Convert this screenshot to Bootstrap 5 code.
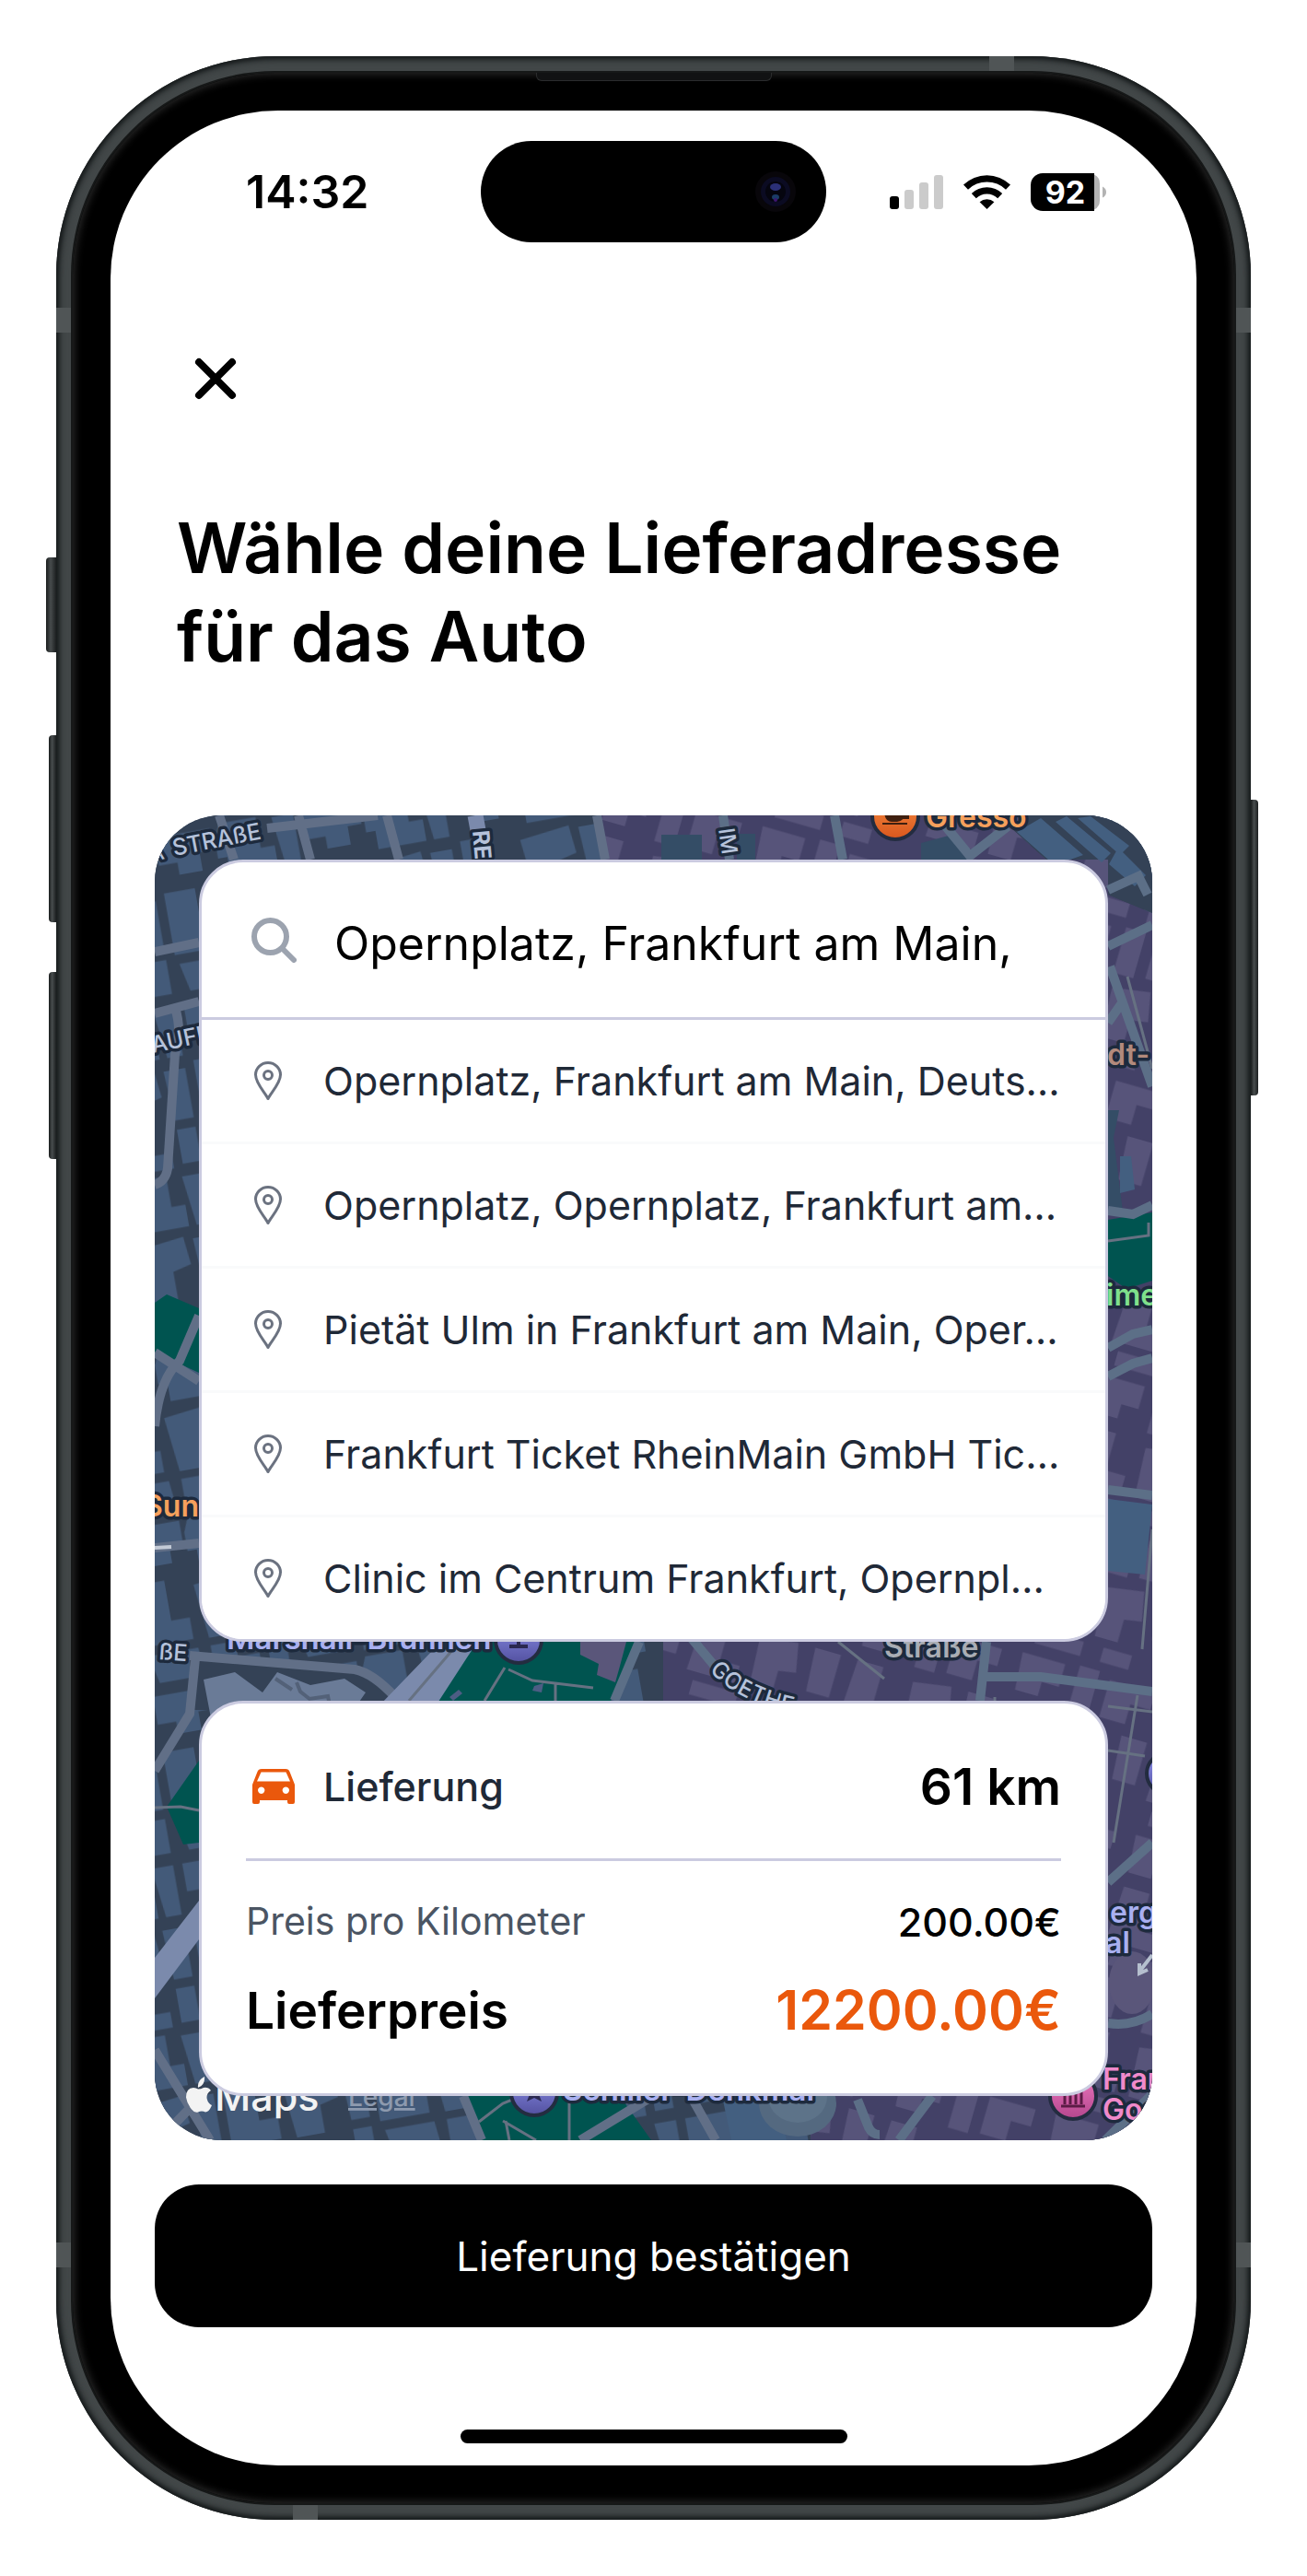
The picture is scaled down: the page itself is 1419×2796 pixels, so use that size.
<!DOCTYPE html>
<html lang="de">
<head>
<meta charset="utf-8">
<meta name="viewport" content="width=device-width, initial-scale=1">
<title>Lieferadresse wählen</title>
<link rel="stylesheet" href="https://cdn.jsdelivr.net/npm/bootstrap@5.3.0/dist/css/bootstrap.min.css">
<style>
  :root { --line: #cbcbe0; --accent: #ea580c; --ink: #1f2937; }
  body { font-family: Inter, "Open Sans", sans-serif; color: #000; background: #fff; padding: 61px; }

  /* phone body */
  .phone { position: relative; padding: 16px; border-radius: 238px; background: #434849;
    box-shadow: inset 0 0 4px 3px #181c1d, inset 0 0 12px 2px #262b2c; }
  .bezel { padding: 41px; border: 2px solid #161818; border-radius: 222px; background: #000;
    box-shadow: inset 0 0 10px 1px #303030; }
  .screen { background: #fff; border-radius: 182px; overflow: hidden; padding-bottom: 24px; }
  .key { position: absolute; left: -10px; width: 10px; border-radius: 4px 0 0 4px;
    background: linear-gradient(90deg, #191c1c, #474c4d 45%, #1c1f20); }
  .key-action { top: 544px; height: 103px; left: -11px; width: 11px; }
  .key-up { top: 737px; height: 203px; left: -8px; width: 8px; }
  .key-down { top: 994px; height: 203px; left: -8px; width: 8px; }
  .key-power { top: 807px; height: 321px; left: auto; right: -8px; width: 8px; border-radius: 0 4px 4px 0; }
  .band { position: absolute; background: #505556; }
  .band-side { width: 16px; height: 27px; }
  .band-edge { width: 27px; height: 16px; }
  .band-lt { left: 0; top: 273px; } .band-rt { right: 0; top: 273px; }
  .band-lb { left: 0; bottom: 274px; } .band-rb { right: 0; bottom: 274px; }
  .band-t { right: 257px; top: 0; } .band-b { left: 257px; bottom: 0; }
  .earpiece { position: absolute; top: 18px; left: 50%; width: 256px; height: 9px; margin-left: -128px;
    background: #111213; border: 1px solid #2b2c2d; border-top: 0; border-radius: 0 0 6px 6px; }

  /* status bar */
  .status { display: grid; grid-template-columns: 1fr 375px 1fr; height: 176px; align-items: center; }
  .clock { font-size: 50px; font-weight: 600; line-height: 60px; padding-left: 147px; }
  .island { height: 110px; border-radius: 55px; background: #000; padding-right: 33px; }
  .camera { width: 44px; height: 44px; }
  .signals { gap: 22px; padding-right: 98px; }
  .battery { position: relative; width: 82px; height: 41px; }
  .battery svg { position: absolute; inset: 0; }
  .battery span { position: relative; width: 75px; line-height: 41px; font-size: 34px; font-weight: 700; color: #fff; }

  .btn-dismiss { width: 84px; height: 84px; margin: 73px 0 0 72px; padding: 0; border: 0; background: none; }
  .page-title { font-size: 75px; line-height: 96px; font-weight: 600; margin: 94px 72px 146px; }

  /* map with panels */
  .map-area { position: relative; margin: 0 48px; padding: 48px; border-radius: 72px; overflow: hidden; gap: 64px; background: #344256; }
  .map-art { position: absolute; inset: 0; width: 100%; height: 100%; }
  .panel { position: relative; border: 3px solid var(--line); border-radius: 48px; background: #fff; overflow: hidden; }
  .search-line { height: 171px; padding: 0 40px 0 54px; gap: 41px; border-bottom: 3px solid var(--line); }
  .search-line input { border: 0; padding: 8px 0 0; font-size: 50px; line-height: 60px; color: #000; box-shadow: none; background: none; }
  .hits .list-group-item { height: 135px; padding: 0 40px 0 57px; gap: 45px; border: 0; border-bottom: 3px solid #f9fafb;
    font-size: 43px; line-height: 60px; color: var(--ink); background: #fff; }
  .hits .list-group-item:last-child { height: 132px; border-bottom: 0; }
  .quote { padding: 48px; }
  .leg { height: 84px; }
  .leg-name { font-size: 43px; font-weight: 500; color: var(--ink); gap: 29px; padding-left: 5px; }
  .strong-line { font-size: 55px; font-weight: 600; }
  .quote hr { margin: 36px 0; border: 0; height: 3px; background: var(--line); opacity: 1; }
  .rate { height: 60px; margin-bottom: 24px; font-size: 43px; font-weight: 500; }
  .rate-name { font-size: 41px; font-weight: 400; color: #4b5563; }
  .total { color: var(--accent); font-size: 59px; }

  .btn-confirm { display: block; width: calc(100% - 96px); height: 155px; margin: 48px 48px 111px; border: 0; border-radius: 48px;
    background: #000; color: #fff; font-size: 44px; font-weight: 400; }
  .home-bar { width: 420px; height: 15px; border-radius: 8px; background: #000; }

  .halo { paint-order: stroke; stroke: #1d2a3d; stroke-width: 7px; stroke-linejoin: round; }
  .road { fill: none; stroke: #616f87; stroke-width: 10px; }
  .road-teal { fill: none; stroke: #5c6f87; stroke-width: 10px; }
  .alley { fill: none; stroke: #667182; stroke-width: 3px; }
</style>
</head>
<body>
<div class="phone">
  <span class="key key-action"></span><span class="key key-up"></span><span class="key key-down"></span><span class="key key-power"></span>
  <div class="bezel">
    <main class="screen">
      <header class="status">
        <time class="clock">14:32</time>
        <div class="island d-flex align-items-center justify-content-end">
          <svg class="camera" viewBox="0 0 44 44" aria-hidden="true">
            <circle cx="22" cy="22" r="22" fill="#08060a"/><circle cx="22" cy="22" r="16" fill="#0b0b22"/>
            <circle cx="22" cy="22" r="11" fill="#05050f"/><ellipse cx="22" cy="17" rx="6" ry="4" fill="#2b3077"/>
            <ellipse cx="22" cy="28" rx="4" ry="3" fill="#1b3c66"/><circle cx="22" cy="31" r="2" fill="#3d1670"/>
          </svg>
        </div>
        <div class="signals d-flex align-items-center justify-content-end">
          <svg width="58" height="37" viewBox="0 0 58 37" role="img" aria-label="Mobilfunk">
            <rect y="23" width="10" height="14" rx="3"/><g fill="#cbcbcb"><rect x="16" y="16" width="10" height="21" rx="3"/><rect x="32" y="8" width="10" height="29" rx="3"/><rect x="48" width="10" height="37" rx="3"/></g>
          </svg>
          <svg width="51" height="37" viewBox="0 0 51 37" role="img" aria-label="WLAN">
            <path d="M0 10.600a36.500 36.500 0 0 1 51 0l-5 5.200a29.300 29.300 0 0 0-41 0z"/>
            <path d="M8.800 20a24.200 24.200 0 0 1 33.400 0l-5 5.200a17 17 0 0 0-23.400 0z"/>
            <path d="M17.600 29.200a11.800 11.800 0 0 1 15.800 0L25.500 37z"/>
          </svg>
          <div class="battery">
            <svg viewBox="0 0 82 41" aria-hidden="true">
              <path d="M13 0h56v41H13A13 13 0 0 1 0 28V13A13 13 0 0 1 13 0z"/>
              <path d="M69 1.500a11 11 0 0 1 6 10v18a11 11 0 0 1-6 10z" fill="#b3b3b3"/>
              <path d="M78 14.500q4 2 4 6t-4 6z" fill="#b3b3b3"/>
            </svg>
            <span class="d-block text-center">92</span>
          </div>
        </div>
      </header>

      <button type="button" class="btn btn-dismiss d-flex align-items-center justify-content-center" aria-label="Schließen">
        <svg width="46" height="46" viewBox="0 0 46 46"><path d="M5 5l36 36M41 5L5 41" stroke="#000" stroke-width="8" stroke-linecap="round"/></svg>
      </button>

      <h1 class="page-title">Wähle deine Lieferadresse für das Auto</h1>

      <section class="map-area d-flex flex-column">
        <svg class="map-art" viewBox="168 885 1083 1438" preserveAspectRatio="xMidYMid slice" role="img" aria-label="Karte von Frankfurt am Main">
          <defs>
            <pattern id="blocks" width="96" height="108" patternUnits="userSpaceOnUse" patternTransform="rotate(-10) scale(1.7)">
              <path fill="#435a79" d="M4 4h36v14h-9v12H16V22H4zM46 2h24v20h9v14H48V24h-6V12zM80 4h14v32H84zM4 40h20v26h12v14H4zM42 46l32-4 2 18-12 3v18H46zM80 44h14v32H82zM6 86h32l2 18H10zM46 86h16v10h14v10H46zM82 82h12v22H82z"/>
            </pattern>
            <pattern id="blocksViolet" width="108" height="98" patternUnits="userSpaceOnUse" patternTransform="rotate(16) scale(1.6)">
              <path fill="#57547a" d="M4 4h30v16H22v10H6zM44 2h14v32H44zM66 6h32v12H84v14H66zM6 40h18v26h14v12H4zM46 44l26-4 4 20-12 2v16H48zM84 40h18v30H86zM10 84h32v10H10zM56 84h20v10H56z"/>
            </pattern>
            <linearGradient id="pinOrange" x1="0" y1="0" x2="0" y2="1"><stop offset="0" stop-color="#f79043"/><stop offset="1" stop-color="#d9561d"/></linearGradient>
            <linearGradient id="pinViolet" x1="0" y1="0" x2="0" y2="1"><stop offset="0" stop-color="#8f93ee"/><stop offset="1" stop-color="#5351a0"/></linearGradient>
            <linearGradient id="pinPink" x1="0" y1="0" x2="0" y2="1"><stop offset="0" stop-color="#ee79c0"/><stop offset="1" stop-color="#b4468d"/></linearGradient>
            <path id="goethe" d="M770 1813q36 42 130 54"/>
          </defs>
          <rect x="168" y="885" width="1083" height="1438" fill="#344256"/>
          <rect x="168" y="885" width="1083" height="1438" fill="url(#blocks)"/>

          <!-- violet quarter -->
          <path fill="#434167" d="M652 885h464l-20 12 40 36h67l0 38 48 20v1332H880v-48l-160-80V1782L652 933z"/>
          <path fill="url(#blocksViolet)" d="M652 885h464l-20 12 40 36h67l0 38 48 20v1332H880v-48l-160-80V1782L652 933z"/>
          <path fill="#344d66" d="M718 906h44v27h-44zM800 905h20v28h-20zM1000 915l30-8 20 26h-50zM1203 1205h12l-6 30 10 80h-16z"/>
          <path fill="#344256" d="M1116 885h135v106l-48-20v-38h-67l-40-36z"/>
          <path fill="#435f80" d="M1130 888l46 40-14 5h-24l-34-30zM1158 886l48 40-10 10-50-44zM1184 886l42 32-10 10-46-40zM1214 920l30 30-12 12-28-24zM1216 1255l12 0 4 36-16 4zM1203 1627l48 6-8 76-40-4z"/>

          <!-- parks -->
          <g fill="#005450">
            <path d="M168 1414l13-9 35 15v70l-48-22zM216 1911l-35 50 18 41 17-2zM1203 1324l48-8v74l-28 9-20-14zM512 1782h178l-27 64H460zM503 2275h170l34 48H523z"/>
          </g>
          <path fill="#5a567a" d="M630 1782h50l-8 30-4 14-20-8 2-12-20-10z"/>
          <path fill="#4d5d84" d="M488 1842l10-8 4 4-10 8zM580 1830l10-3-2 10-10-2z"/>
          <path fill="#344256" d="M206 1797l179 15 60 34-10 10H206z"/>
          <path fill="#6a7b97" d="M221 1823l34-8 30 22 16-22 36 14 37-7 23 15-9 13-158 20z"/>
          <path fill="none" stroke="#536178" stroke-width="4" d="M299 1822l18 12M322 1826l4 10 10 8 20-3 2 10"/>

          <!-- roads -->
          <g class="road">
            <path d="M290 899l120-14M324 885l13 48M238 885l16 48M420 885l13 48M648 885l9 48M168 1033l48-10M168 1100l48-13M190 1094q8 24 0 50l-8 124q-2 14-14 18M168 1468l48 31M216 1428l-21 49q-22 20-27 71M168 1680l48-5"/>
            <path d="M206 1797l179 15q20 4 44 30M212 1800l-6 60-38 62M168 2225l60 98M185 2310l31-32M503 2275l20 48M630 2323l79-48M750 2275l27 48"/>
          </g>
          <path d="M516 885l9 48" fill="none" stroke="#7b8aac" stroke-width="17"/>
          <path d="M471 1790h42l-39 60h-61zM168 2125l48-62v42l-48 64z" fill="#7b8aac"/>
          <path d="M492 1790l-48 56" class="alley" stroke="#334256"/>
          <g class="road-teal">
            <path d="M785 885l7 48M906 885l9 48M1021 890l32 39 41-32M1203 966l33-15 10 20M1203 1027l48-23M1205 1049l46 130M1203 1110l14 -20M1203 1314l27 4 21-10M1203 1463l27-15 21-5M1203 1494l27-14 21-6M1203 1617l48 6M694 1782l-27 64M748 1775l42 50M1071 1782l-7 64M1071 1820h59l121 16M1251 2000l-48 43M1203 2196q26 4 48-10M931 2279l12 30q4 8 12 8M1012 2275l-36 48M1200 2323l51-50"/>
          </g>
          <g class="alley">
            <path d="M168 1962l28-1 20 4M1203 1347l44-6 0-14M548 1810l-22 36M552 1812l26 12 66 8M603 1828v18M1080 1842v8M1203 1852l48 6M1240 1790l11-130M1203 1900l40 6M1235 1840l-26 160M520 2303l26-20 20-8M546 2302l36 21M618 2275v48M549 2302l4 21M910 1782l50 40M1224 1060l27 100"/>
          </g>
          <path d="M168 1680l18-1" stroke="#c3cad6" stroke-width="4"/>
          <ellipse cx="1229" cy="2152" rx="25" ry="34" fill="#5a567a"/>
          <path d="M1251 2122l-14 18M1237 2131v11l9-4" stroke="#b5bfce" stroke-width="4" fill="none"/>
          <path fill="#435f80" d="M784 2275h60l10 48h-60z"/>
          <ellipse cx="866" cy="2283" rx="42" ry="36" fill="#546980"/><ellipse cx="866" cy="2276" rx="32" ry="28" fill="#5d7389"/>

          <!-- labels -->
          <g font-family="Inter, sans-serif" font-weight="500" font-size="25" fill="#b5c2da">
            <text class="halo" transform="translate(189 929) rotate(-11)">STRAßE</text>
            <text class="halo" transform="translate(164 935) rotate(-11)" font-size="22">A</text>
            <text class="halo" transform="translate(166 1143) rotate(-12)">AUFF</text>
            <text class="halo" transform="translate(172 1801) rotate(4)">ßE</text>
            <text class="halo" transform="translate(513 902) rotate(85)" font-weight="700">RE</text>
            <text class="halo" transform="translate(780 900) rotate(82)" font-size="24">IM</text>
            <text class="halo" font-size="25"><textPath href="#goethe">GOETHE</textPath></text>
          </g>
          <g font-family="Inter, sans-serif" font-weight="600" font-size="32">
            <text class="halo" x="1005" y="898" fill="#f5a05c">Gresso</text>
            <text class="halo" x="1202" y="1156" fill="#b28a7c">dt-</text>
            <text class="halo" x="1201" y="1417" fill="#7fe08c">ime</text>
            <text class="halo" x="156" y="1646" fill="#f5a05c">Sun</text>
            <text class="halo" x="246" y="1790" fill="#a9b0f0" font-size="33">Marshall-Brunnen</text>
            <text class="halo" x="960" y="1799" fill="#a9adb4">Straße</text>
            <text class="halo" x="1205" y="2087" fill="#a9b0f0">erg</text>
            <text class="halo" x="1200" y="2120" fill="#a9b0f0">al</text>
            <text class="halo" x="611" y="2280" fill="#a9b0f0" font-size="33">Schiller-Denkmal</text>
            <text class="halo" x="1197" y="2268" fill="#f08acb">Fran</text>
            <text class="halo" x="1197" y="2301" fill="#f08acb">Goe</text>
          </g>
          <g stroke="#232c40" stroke-width="4">
            <circle cx="972" cy="886" r="25" fill="url(#pinOrange)"/>
            <circle cx="563" cy="1780" r="25" fill="url(#pinViolet)"/>
            <circle cx="580" cy="2271" r="25" fill="url(#pinViolet)"/>
            <circle cx="1267" cy="1925" r="22" fill="url(#pinViolet)"/>
            <circle cx="1165" cy="2275" r="25" fill="url(#pinPink)"/>
          </g>
          <path d="M961 882h20v3h5v3h-6q-3 3-6 3h-6q-6 0-7-9zM958 894h27" fill="#402010" stroke="#402010" stroke-width="2"/>
          <path d="M553 1787h20M563 1778v8" stroke="#2a2850" stroke-width="4"/>
          <path d="M572 2281l3-8h10l3 8-8-4z" fill="#2a2850"/>
          <path d="M1152 2286h26M1156 2268v16M1162 2268v16M1168 2268v16M1174 2268v16" stroke="#5c1c46" stroke-width="3"/>

          <!-- map provider -->
          <g transform="translate(200 2254)" fill="#f3f3f3">
            <path d="M22 0q1 9-7 12Q14 4 22 0zM15 13.500q3 0 6-1.500 5-1 8 3-6 4-4 10 1 4 5 6-3 7.500-7 7.500-4-2-8 0-4 1-7-3-5-6-6-13Q2 12 10 12q3 0 5 1.500z"/>
          </g>
          <text x="233" y="2291" font-family="Inter, sans-serif" font-weight="500" font-size="43" fill="#f3f3f3">Maps</text>
          <text x="378" y="2286" font-family="Inter, sans-serif" font-weight="500" font-size="28" fill="#8d9aae" text-decoration="underline">Legal</text>
        </svg>

        <form class="panel" onsubmit="return false">
          <div class="search-line d-flex align-items-center">
            <svg class="flex-shrink-0" width="49" height="49" viewBox="0 0 49 49" fill="none" stroke="#9ca3af" stroke-width="6" stroke-linecap="round" aria-hidden="true"><circle cx="20.500" cy="20.500" r="17.500"/><path d="M33.500 33.500L46 46"/></svg>
            <input class="form-control" type="text" aria-label="Lieferadresse" value="Opernplatz, Frankfurt am Main,">
          </div>
          <div class="hits list-group list-group-flush">
            <button type="button" class="list-group-item list-group-item-action d-flex align-items-center"><svg class="flex-shrink-0" width="30" height="42" viewBox="0 0 30 42" fill="none" stroke="#6b7280" stroke-width="3" stroke-linejoin="round"><path d="M15 40.500C12 34 1.500 24 1.500 14.500a13.500 13 0 0 1 27 0C28.500 24 18 34 15 40.500z"/><circle cx="15" cy="15" r="4.500"/></svg><span class="text-truncate">Opernplatz, Frankfurt am Main, Deuts…</span></button>
            <button type="button" class="list-group-item list-group-item-action d-flex align-items-center"><svg class="flex-shrink-0" width="30" height="42" viewBox="0 0 30 42" fill="none" stroke="#6b7280" stroke-width="3" stroke-linejoin="round"><path d="M15 40.500C12 34 1.500 24 1.500 14.500a13.500 13 0 0 1 27 0C28.500 24 18 34 15 40.500z"/><circle cx="15" cy="15" r="4.500"/></svg><span class="text-truncate">Opernplatz, Opernplatz, Frankfurt am…</span></button>
            <button type="button" class="list-group-item list-group-item-action d-flex align-items-center"><svg class="flex-shrink-0" width="30" height="42" viewBox="0 0 30 42" fill="none" stroke="#6b7280" stroke-width="3" stroke-linejoin="round"><path d="M15 40.500C12 34 1.500 24 1.500 14.500a13.500 13 0 0 1 27 0C28.500 24 18 34 15 40.500z"/><circle cx="15" cy="15" r="4.500"/></svg><span class="text-truncate">Pietät Ulm in Frankfurt am Main, Oper…</span></button>
            <button type="button" class="list-group-item list-group-item-action d-flex align-items-center"><svg class="flex-shrink-0" width="30" height="42" viewBox="0 0 30 42" fill="none" stroke="#6b7280" stroke-width="3" stroke-linejoin="round"><path d="M15 40.500C12 34 1.500 24 1.500 14.500a13.500 13 0 0 1 27 0C28.500 24 18 34 15 40.500z"/><circle cx="15" cy="15" r="4.500"/></svg><span class="text-truncate">Frankfurt Ticket RheinMain GmbH Tic…</span></button>
            <button type="button" class="list-group-item list-group-item-action d-flex align-items-center"><svg class="flex-shrink-0" width="30" height="42" viewBox="0 0 30 42" fill="none" stroke="#6b7280" stroke-width="3" stroke-linejoin="round"><path d="M15 40.500C12 34 1.500 24 1.500 14.500a13.500 13 0 0 1 27 0C28.500 24 18 34 15 40.500z"/><circle cx="15" cy="15" r="4.500"/></svg><span class="text-truncate">Clinic im Centrum Frankfurt, Opernpl…</span></button>
          </div>
        </form>

        <div class="panel quote">
          <div class="leg d-flex align-items-center justify-content-between">
            <span class="leg-name d-flex align-items-center">
              <svg width="50" height="38" viewBox="0 0 50 38" aria-hidden="true"><path fill="#ea580c" fill-rule="evenodd" d="M12 0h26q3.500 0 4.500 3L48 17v19q0 2-2 2h-4q-2 0-2-2v-2H10v2q0 2-2 2H4q-2 0-2-2V17L7.500 3Q8.500 0 12 0zM11.500 3.500L7 13.500h36L38.500 3.500zM11.700 19.500a3.700 3.700 0 1 0 .010 0zM38.300 19.500a3.700 3.700 0 1 0 .010 0z"/></svg>
              <span>Lieferung</span>
            </span>
            <span class="strong-line">61 km</span>
          </div>
          <hr>
          <div class="rate d-flex align-items-center justify-content-between"><span class="rate-name">Preis pro Kilometer</span><span>200.00€</span></div>
          <div class="leg strong-line d-flex align-items-center justify-content-between"><span>Lieferpreis</span><span class="total">12200.00€</span></div>
        </div>
      </section>

      <button type="button" class="btn btn-confirm">Lieferung bestätigen</button>
      <div class="home-bar mx-auto"></div>
    </main>
  </div>
  <span class="earpiece"></span>
  <span class="band band-side band-lt"></span><span class="band band-side band-rt"></span><span class="band band-side band-lb"></span><span class="band band-side band-rb"></span>
  <span class="band band-edge band-t"></span><span class="band band-edge band-b"></span>
</div>
<script src="https://cdn.jsdelivr.net/npm/bootstrap@5.3.0/dist/js/bootstrap.bundle.min.js"></script>
</body>
</html>
